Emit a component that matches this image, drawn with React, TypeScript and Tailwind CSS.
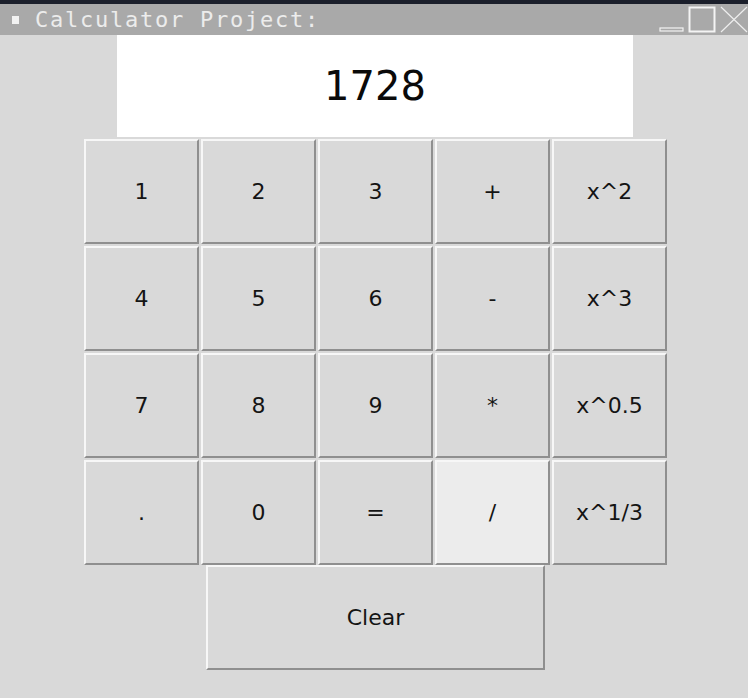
import React from 'react'

// ── Title bar ────────────────────────────────────────────────────────────────

const TitleBar = () => (
  <div className="flex flex-col">
    <div className="h-[4px] bg-[#1b1f2b]" />
    <div className="relative flex h-[31px] items-center bg-[#a9a9a9]">
      <span className="ml-[12px] h-[8px] w-[7px] bg-[#f2f2f2]" />
      <span
        className="ml-[16px] text-[22px] leading-none tracking-[1.75px] text-[#ececec]"
        style={{ fontFamily: '"DejaVu Sans Mono", "Liberation Mono", monospace' }}
      >
        Calculator Project:
      </span>
      <svg className="absolute right-0 top-0" width="92" height="31" viewBox="0 0 92 31" fill="none">
        {/* minimise */}
        <rect x="4" y="24" width="23" height="3" stroke="#f4f4f4" strokeWidth="1.2" />
        {/* maximise */}
        <rect x="33.5" y="3.5" width="25" height="24" stroke="#f4f4f4" strokeWidth="2" />
        {/* close */}
        <path d="M65 3L91 28M91 3L65 28" stroke="#eeeeee" strokeWidth="1.2" />
      </svg>
    </div>
  </div>
)

// ── Key ──────────────────────────────────────────────────────────────────────

const Key = ({ label, active = false, wide = false }: { label: string; active?: boolean; wide?: boolean }) => (
  <button
    className={`flex items-center justify-center border-2 border-t-[#f7f7f7] border-l-[#f7f7f7] border-r-[#8f8f8f] border-b-[#8f8f8f] text-[22px] text-[#141414] ${
      active ? 'bg-[#ececec]' : 'bg-[#d9d9d9]'
    } ${wide ? 'h-[105px] w-[339px]' : 'h-[105px] w-[115px]'}`}
  >
    {label}
  </button>
)

const keys = [
  '1', '2', '3', '+', 'x^2',
  '4', '5', '6', '-', 'x^3',
  '7', '8', '9', '*', 'x^0.5',
  '.', '0', '=', '/', 'x^1/3',
]

// ── Main ─────────────────────────────────────────────────────────────────────

export default function App() {
  return (
    <div
      className="flex h-[698px] w-[748px] flex-col bg-[#d9d9d9]"
      style={{ fontFamily: '"DejaVu Sans", "Liberation Sans", sans-serif' }}
    >
      <TitleBar />

      {/* Display */}
      <div className="ml-[117px] flex h-[102px] w-[516px] items-center justify-center bg-white">
        <span className="text-[40px] leading-none text-[#0a0a0a]">1728</span>
      </div>

      {/* Keypad */}
      <div className="ml-[84px] mt-[2px] grid grid-cols-[repeat(5,115px)] gap-x-[2px] gap-y-[2px]">
        {keys.map((k) => (
          <Key key={k} label={k} active={k === '/'} />
        ))}
      </div>

      <div className="ml-[206px]">
        <Key label="Clear" wide />
      </div>
    </div>
  )
}
